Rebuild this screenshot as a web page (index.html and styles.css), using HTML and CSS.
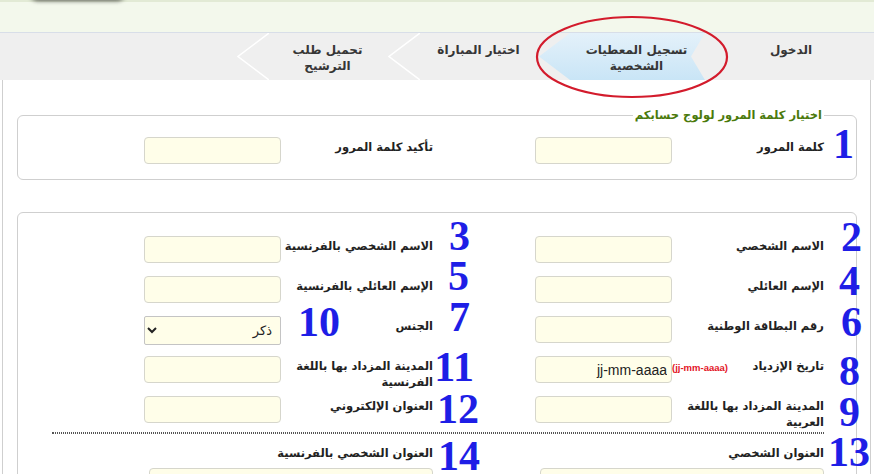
FILE: index.html
```html
<!DOCTYPE html>
<html lang="ar" dir="rtl">
    <head>
        <meta charset="utf-8">
        <link rel="stylesheet" href="styles.css">
    </head>
    <body>
        <div class="top">
            <div class="top-shadow"></div>
        </div>

        <div class="steps">
            <div class="step step-first">الدخول</div>
            <div class="step active"><span>تسجيل المعطيات<br>الشخصية</span></div>
            <div class="step">
                <svg class="sep" viewBox="0 0 32 47"><polyline points="32,0 1,23.5 32,47"/></svg>
                <span>اختيار المباراة</span>
            </div>
            <div class="step">
                <svg class="sep" viewBox="0 0 32 47"><polyline points="32,0 1,23.5 32,47"/></svg>
                <span>تحميل طلب<br>الترشيح</span>
            </div>
            <svg class="ring" viewBox="0 0 194 84"><ellipse cx="97" cy="42" rx="95" ry="40"/></svg>
        </div>

        <div class="page">
            <fieldset class="box box-login">
                <legend>اختيار كلمة المرور لولوج حسابكم</legend>
                <div class="row">
                    <div class="field">
                        <span class="num n1">1</span>
                        <label>كلمة المرور</label>
                        <input type="password">
                    </div>
                    <div class="field">
                        <label>تأكيد كلمة المرور</label>
                        <input type="password">
                    </div>
                </div>
            </fieldset>

            <fieldset class="box box-info">
                <div class="row">
                    <div class="field">
                        <span class="num n2">2</span>
                        <label>الاسم الشخصي</label>
                        <input type="text">
                    </div>
                    <div class="field">
                        <span class="num n3">3</span>
                        <label>الاسم الشخصي بالفرنسية</label>
                        <input type="text">
                    </div>
                </div>
                <div class="row">
                    <div class="field">
                        <span class="num n4">4</span>
                        <label>الإسم العائلي</label>
                        <input type="text">
                    </div>
                    <div class="field">
                        <span class="num n5">5</span>
                        <label>الإسم العائلي بالفرنسية</label>
                        <input type="text">
                    </div>
                </div>
                <div class="row">
                    <div class="field">
                        <span class="num n6">6</span>
                        <label>رقم البطاقة الوطنية</label>
                        <input type="text">
                    </div>
                    <div class="field">
                        <span class="num n7">7</span>
                        <span class="num n10">10</span>
                        <label>الجنس</label>
                        <select>
                            <option>ذكر</option>
                            <option>أنثى</option>
                        </select>
                    </div>
                </div>
                <div class="row">
                    <div class="field">
                        <span class="num n8">8</span>
                        <label><span class="hint">(jj-mm-aaaa)</span>تاريخ الإزدياد</label>
                        <input type="text" class="date" value="jj-mm-aaaa">
                    </div>
                    <div class="field">
                        <span class="num n11">11</span>
                        <label class="wrap">المدينة المزداد بها باللغة الفرنسية</label>
                        <input type="text">
                    </div>
                </div>
                <div class="row row-tall">
                    <div class="field">
                        <span class="num n9">9</span>
                        <label class="wrap">المدينة المزداد بها باللغة العربية</label>
                        <input type="text">
                    </div>
                    <div class="field">
                        <span class="num n12">12</span>
                        <label>العنوان الإلكتروني</label>
                        <input type="text">
                    </div>
                </div>

                <div class="rule"></div>

                <div class="row row-addr">
                    <div class="field">
                        <span class="num n13">13</span>
                        <label>العنوان الشخصي</label>
                        <textarea></textarea>
                    </div>
                    <div class="field">
                        <span class="num n14">14</span>
                        <label>العنوان الشخصي بالفرنسية</label>
                        <textarea></textarea>
                    </div>
                </div>
            </fieldset>
        </div>
    </body>
</html>
```

FILE: styles.css
```css
body{
    margin: 0;
    font-family: "DejaVu Sans", Tahoma, sans-serif;
    font-size: 12px;
    color: #222;
    background: #fff;
}

/* green band on top */
.top{
    position: relative;
    height: 30px;
    background: #f3f8ec;
    border-top: 2px solid #e2ead5;
    border-bottom: 1px solid #d8dee8;
}

.top-shadow{
    position: absolute;
    left: 30px;
    top: -14px;
    width: 95px;
    height: 12px;
    background: #777;
    border-radius: 0 0 8px 8px;
    box-shadow: 0 1px 4px rgba(0, 0, 0, 0.6);
}

/* wizard steps */
.steps{
    position: relative;
    display: flex;
    height: 47px;
    background: #efefef;
}

.step{
    position: relative;
    width: 151px;
    box-sizing: border-box;
    padding: 9px 0 0 30px;
    display: flex;
    justify-content: center;
    text-align: center;
    font-weight: bold;
    line-height: 16px;
    color: #363636;
}

.step-first{
    width: 184px;
    padding-right: 12px;
}

.step span{
    position: relative;
}

.step .sep{
    position: absolute;
    left: 0;
    top: 0;
    width: 32px;
    height: 47px;
    fill: none;
    stroke: #fff;
    stroke-width: 1.5;
}

.step.active::before{
    content: "";
    position: absolute;
    top: 0;
    bottom: 0;
    left: 0;
    right: -15px;
    background: linear-gradient(#e4f1fa, #c9e5f6);
    clip-path: polygon(31px 0, 100% 0, calc(100% - 14px) 50%, 100% 100%, 31px 100%, 0 50%);
}

.step.active span{
    margin-right: -14px;
}

.ring{
    position: absolute;
    z-index: 2;
    left: 535px;
    top: -18px;
    width: 194px;
    height: 84px;
    overflow: visible;
    fill: none;
    stroke: #d31b2c;
    stroke-width: 2.2;
}

/* form */
.page{
    margin: 0 3px 0 2px;
    padding: 27px 13px 40px 14px;
    border-left: 1px solid #cfcfcf;
    border-right: 1px solid #cfcfcf;
}

.box{
    margin: 0 0 32px;
    padding: 14px 0 15px;
    border: 1px solid #cfcfcf;
    border-radius: 6px;
    min-width: 0;
}

.box legend{
    margin-right: 32px;
    padding: 0 2px;
    color: #4b7a0c;
    font-size: 11.5px;
    font-weight: bold;
    line-height: 16px;
}

.box-info{
    padding-top: 23px;
}

.row{
    display: flex;
    gap: 102px;
    height: 40px;
    margin-right: 32px;
}

.box-login .row,
.row-tall{
    height: auto;
}

.field{
    position: relative;
    display: flex;
    align-items: flex-start;
}

.field label{
    width: 152px;
    padding-top: 2px;
    line-height: 16px;
    font-size: 11.5px;
    font-weight: bold;
    white-space: nowrap;
}

.field label.wrap{
    white-space: normal;
}

.hint{
    float: left;
    margin: 2px 3px 0 0;
    color: #e3131f;
    font-family: "Liberation Sans", Arial, sans-serif;
    font-size: 9.5px;
}

input,
select,
textarea{
    box-sizing: border-box;
    width: 137px;
    height: 27px;
    padding: 0 4px;
    border: 1px solid #d6d6cc;
    border-radius: 4px;
    background: #fffee9;
    font-family: "Liberation Sans", Arial, sans-serif;
    font-size: 14px;
    color: #222;
}

select{
    height: 29px;
    border-color: #c4c4c4;
    border-radius: 2px;
    font-family: "DejaVu Sans", Tahoma, sans-serif;
    font-size: 13px;
}

.rule{
    margin: 2px 32px 0 34px;
    border-top: 1px dotted #555;
    border-bottom: 1px dotted #555;
}

.row-addr{
    height: auto;
    margin-top: 9px;
}

.row-addr .field{
    flex-direction: column;
    width: 289px;
}

.row-addr label{
    width: auto;
}

.row-addr textarea{
    width: 284px;
    height: 40px;
    margin-top: 7px;
    resize: none;
}

/* blue step numbers drawn over the form */
.num{
    position: absolute;
    z-index: 1;
    font: bold 42px/42px "Liberation Serif", "Times New Roman", serif;
    color: #1e1ee6;
}

.n1{ top: -14px; right: -30px; }
.n2{ top: -20px; right: -38px; }
.n3{ top: -21px; right: -37px; }
.n4{ top: -16px; right: -36px; }
.n5{ top: -21px; right: -36px; }
.n6{ top: -15px; right: -38px; }
.n7{ top: -20px; right: -37px; }
.n8{ top: -6px; right: -36px; }
.n9{ top: -5px; right: -36px; }
.n10{ top: -15px; right: 93px; }
.n11{ top: -10px; right: -41px; }
.n12{ top: -8px; right: -46px; }
.n13{ top: -12px; right: -46px; }
.n14{ top: -8px; right: -47px; }
```
